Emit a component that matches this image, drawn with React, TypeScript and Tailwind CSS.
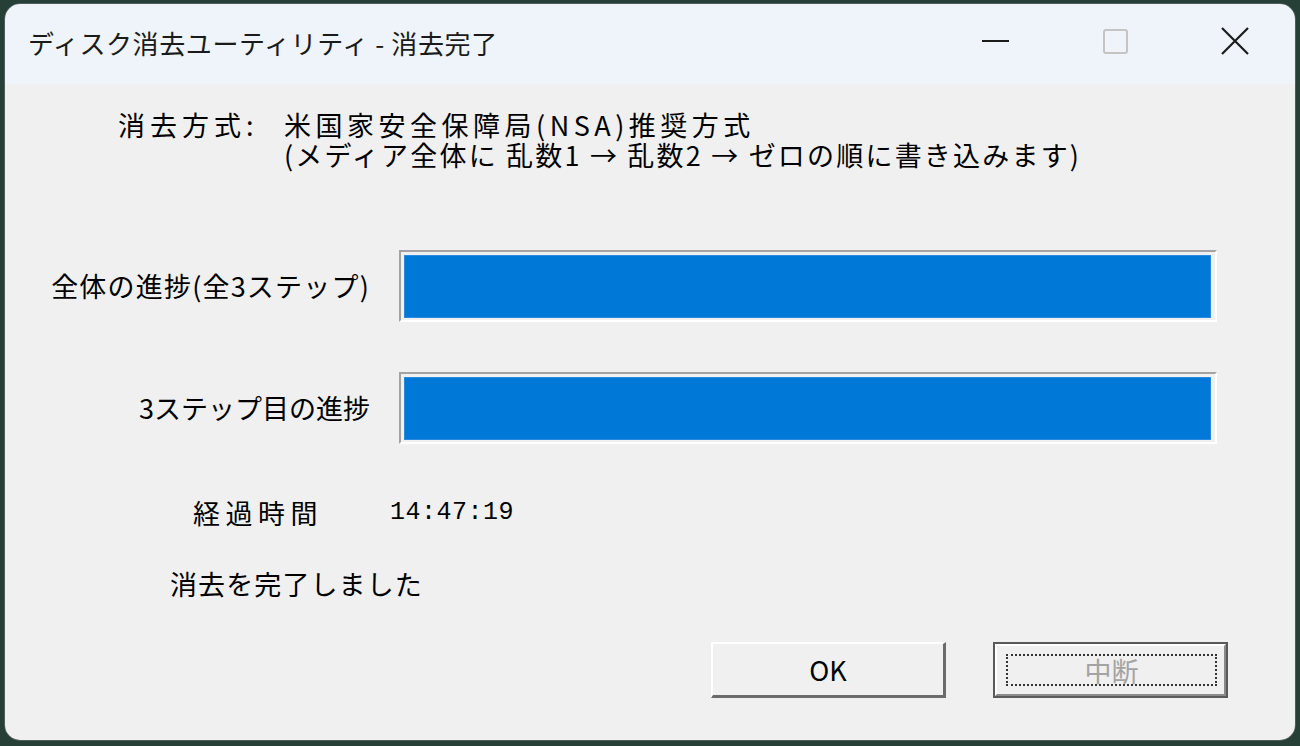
const font = "font-['Noto_Sans_CJK_JP','Noto_Sans',sans-serif]";

function ProgressBar() {
  return (
    <div className="h-[72px] w-[818px] border-t-2 border-l-2 border-b-2 border-r-2 border-t-[#a3a3a3] border-l-[#a3a3a3] border-b-white border-r-white pl-[3px] pt-[3px] pr-[4px] pb-[2px]">
      <div className="h-full w-full bg-[#0078d7] border border-[#2a8ae0]" />
    </div>
  );
}

function TitleButtons() {
  return (
    <div className="flex h-[74px] self-start">
      <div className="w-[120px] flex items-center justify-center">
        <div className="w-[27px] h-[2px] bg-[#1b1b1b]" />
      </div>
      <div className="w-[120px] flex items-center justify-center">
        <div className="w-[25px] h-[25px] border-2 border-[#c4c4c4] rounded-[3px]" />
      </div>
      <div className="w-[120px] flex items-center justify-center">
        <svg width="30" height="30" viewBox="0 0 30 30">
          <path d="M2 2 L28 28 M28 2 L2 28" stroke="#1b1b1b" strokeWidth="2.2" fill="none" />
        </svg>
      </div>
    </div>
  );
}

export default function App() {
  return (
    <div className={`w-[1300px] h-[746px] bg-[#263f37] pt-[3px] pl-[4px] pr-[4px] pb-[5px] ${font}`}>
      <div className="w-full h-full rounded-[16px] overflow-hidden flex flex-col border border-[#4d5e58]">
        <div className="h-[80px] bg-[#eef4f9] flex items-center justify-between pl-[23px]">
          <span className="text-[26px] text-[#1a1a1a] leading-none tracking-[0.6px] -mt-[2px]">ディスク消去ユーティリティ - 消去完了</span>
          <TitleButtons />
        </div>
        <div className="flex-1 bg-[#f0f0f0] text-black text-[27px] leading-[30px]">
          <div className="mt-[26px] ml-[113px] flex">
            <div className="w-[166px] tracking-[5px]">消去方式:</div>
            <div>
              <div className="tracking-[4.5px]">米国家安全保障局(NSA)推奨方式</div>
              <div className="tracking-[2.2px]">(メディア全体に 乱数1 → 乱数2 → ゼロの順に書き込みます)</div>
            </div>
          </div>

          <div className="mt-[80px] grid grid-cols-[394px_818px] gap-y-[50px] items-center">
            <div className="text-right pr-[29px] tracking-[1.2px]">全体の進捗(全3ステップ)</div>
            <ProgressBar />
            <div className="text-right pr-[29px]">3ステップ目の進捗</div>
            <ProgressBar />
          </div>

          <div className="mt-[54px] ml-[188px] flex items-center">
            <div className="w-[197px] tracking-[5.5px]">経過時間</div>
            <div className="font-['Liberation_Mono',monospace] text-[25px] tracking-[0.5px]">14:47:19</div>
          </div>

          <div className="mt-[41px] ml-[165px] tracking-[1.1px]">消去を完了しました</div>

          <div className="mt-[43px] ml-[706px] flex gap-[47px]">
            <button className="w-[235px] h-[56px] bg-[#f0f0f0] border-t-2 border-l-2 border-t-white border-l-white border-b-[3px] border-r-[3px] border-b-[#6b6b6b] border-r-[#6b6b6b] text-[27px] leading-none text-black">
              OK
            </button>
            <button className="w-[235px] h-[56px] bg-[#f0f0f0] border-2 border-[#5a5a5a] p-0">
              <div className="w-full h-full border-t-2 border-l-2 border-t-white border-l-white border-b-2 border-r-2 border-b-[#8a8a8a] border-r-[#8a8a8a] pt-[8px] pl-[9px] pr-[7px] pb-[8px]">
                <div className="w-full h-full border-2 border-dotted border-[#333] flex items-center justify-center text-[27px] leading-none text-[#a3a3a3]">
                  中断
                </div>
              </div>
            </button>
          </div>
        </div>
      </div>
    </div>
  );
}
